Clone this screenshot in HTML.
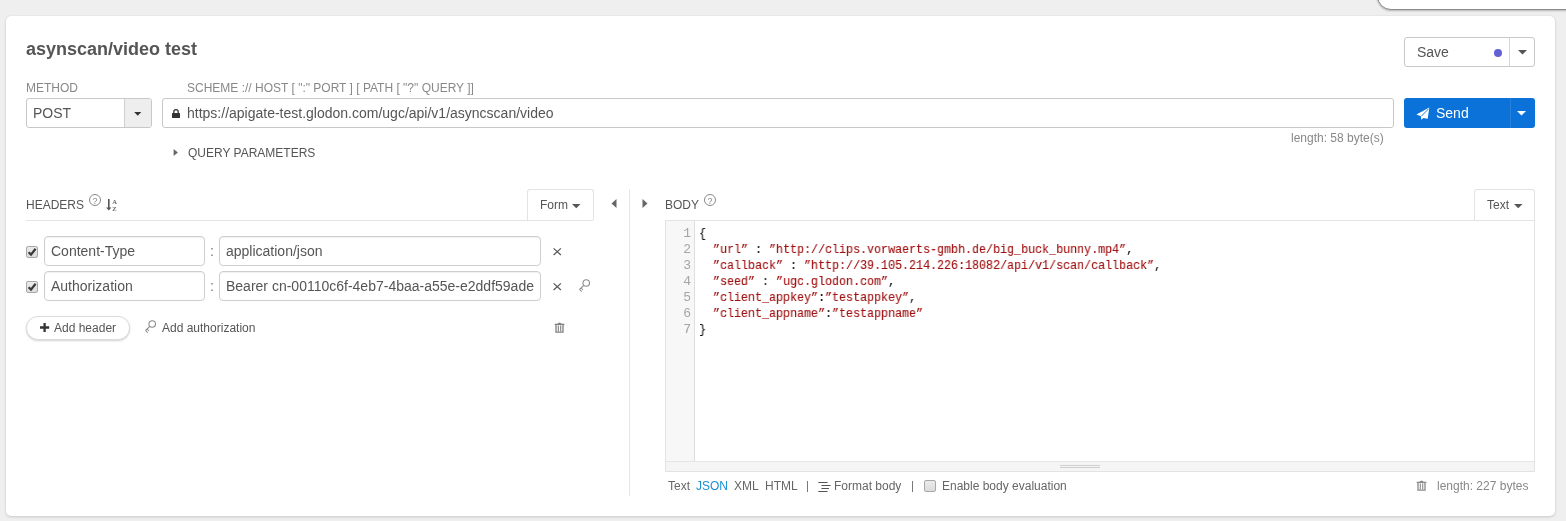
<!DOCTYPE html>
<html><head><meta charset="utf-8">
<style>
*{box-sizing:border-box;margin:0;padding:0}
html,body{width:1566px;height:521px;overflow:hidden;background:#efefef;font-family:"Liberation Sans",sans-serif;color:#505050}
.abs{position:absolute}
#topel{position:absolute;left:1377px;top:-29px;width:220px;height:39px;background:#fff;border:1px solid #8c8c8c;border-radius:14px;box-shadow:0 1px 2px rgba(0,0,0,.25)}
#card{position:absolute;left:6px;top:16px;width:1549px;height:500px;background:#fff;border-radius:5px;box-shadow:0 0 1px rgba(0,0,0,.14),0 1px 3px rgba(0,0,0,.15)}
.t{position:absolute;white-space:nowrap;line-height:1;will-change:transform}
.s12{font-size:12px}
.s14{font-size:14px}
.box{position:absolute;border:1px solid #c8c8c8;border-radius:3px;background:#fff}
.inp{position:absolute;border:1px solid #cfcfcf;border-radius:4px;background:#fff;box-shadow:inset 0 1px 1px rgba(0,0,0,.06)}
.cb{position:absolute;width:12px;height:12px;border:1px solid #a8a8a8;border-radius:2px;background:linear-gradient(#ebebeb,#dcdcdc)}
svg{position:absolute;overflow:visible;will-change:transform}
.code{position:absolute;left:699px;top:226px;font-family:"Liberation Mono",monospace;font-size:13px;letter-spacing:0;transform:scaleX(0.89744);transform-origin:0 0;line-height:16px;color:#111;white-space:pre;will-change:transform}
.code .s{color:#a01010}
.code{-webkit-text-stroke:0.12px}
.ln{position:absolute;left:666px;top:226px;width:25px;text-align:right;font-family:"Liberation Mono",monospace;font-size:13px;letter-spacing:0;line-height:16px;color:#a5a5a5;white-space:pre;will-change:transform}
</style></head><body>
<div id="topel"></div>
<div id="card"></div>

<!-- title -->
<div class="t" style="left:26px;top:40px;font-size:18px;font-weight:bold;color:#555">asynscan/video test</div>

<!-- save button -->
<div class="box" style="left:1404px;top:37px;width:131px;height:30px"></div>
<div class="abs" style="left:1509px;top:38px;width:1px;height:28px;background:#d6d6d6"></div>
<div class="t s14" style="left:1417px;top:45px;color:#555">Save</div>
<div class="abs" style="left:1494px;top:49px;width:8px;height:8px;border-radius:50%;background:#6461d6"></div>
<svg style="left:1518px;top:50px" width="9" height="5"><path d="M0 0H9L4.5 4.5Z" fill="#555"/></svg>

<!-- labels -->
<div class="t s12" style="left:26px;top:82px;color:#888">METHOD</div>
<div class="t s12" style="left:187px;top:82px;color:#888">SCHEME :// HOST [ ":" PORT ] [ PATH [ "?" QUERY ]]</div>

<!-- method select -->
<div class="box" style="left:26px;top:98px;width:126px;height:30px;overflow:hidden"><div class="abs" style="left:97px;top:0;width:28px;height:28px;background:#eee;border-left:1px solid #d0d0d0"></div></div>
<div class="t s14" style="left:33px;top:106px;color:#555">POST</div>
<svg style="left:134px;top:112px" width="8" height="5"><path d="M0.2 0H7.3L3.75 3.7Z" fill="#333"/></svg>

<!-- url -->
<div class="box" style="left:162px;top:98px;width:1232px;height:30px"></div>
<svg style="left:172px;top:109px" width="9" height="10"><path d="M1.8 4.2V2.9a2.2 2.2 0 0 1 4.4 0V4.2" stroke="#333" stroke-width="1.25" fill="none"/><rect x="0" y="4" width="8" height="5" rx="0.5" fill="#333"/></svg>
<div class="t s14" style="left:187px;top:106px;color:#555">https://apigate-test.glodon.com/ugc/api/v1/asyncscan/video</div>

<!-- send -->
<div class="abs" style="left:1404px;top:98px;width:131px;height:30px;background:#0a72d8;border-radius:3px"></div>
<div class="abs" style="left:1510px;top:98px;width:1px;height:30px;background:#2a7fd8"></div>
<svg style="left:1416px;top:107px" width="15" height="14"><path d="M13.3 0.6L0.4 7.6 5 9.3 5.2 12.8 7.4 11 11.7 11.8Z" fill="#fff"/><path d="M5.3 9.2L12.6 1.8" stroke="#0a72d8" stroke-width="0.9"/></svg>
<div class="t s14" style="left:1436px;top:106px;color:#fff">Send</div>
<svg style="left:1517px;top:111px" width="9" height="5"><path d="M0 0H9L4.5 4.5Z" fill="#fff"/></svg>

<div class="t s12" style="left:1291px;top:132px;color:#888">length: 58 byte(s)</div>

<svg style="left:173px;top:149px" width="6" height="8"><path d="M0.6 0V7L4.9 3.5Z" fill="#666"/></svg>
<div class="t s12" style="left:187.5px;top:147px;color:#555">QUERY PARAMETERS</div>

<!-- headers -->
<div class="t s12" style="left:26px;top:199px;color:#555">HEADERS</div>
<div class="abs" style="left:26px;top:220px;width:567px;height:1px;background:#e3e3e3"></div>


<!-- headers icons -->
<svg style="left:89px;top:194px" width="12" height="12"><circle cx="6" cy="6" r="5.5" stroke="#888" stroke-width="1" fill="none"/><text x="6" y="9.5" font-size="9" text-anchor="middle" fill="#888" font-family="Liberation Sans">?</text></svg>
<svg style="left:104px;top:197px" width="16" height="16"><rect x="4" y="2" width="1.6" height="9" fill="#555"/><path d="M2.2 10.5H7.4L4.8 13.6Z" fill="#555"/><text x="10.5" y="7" font-size="6.5" font-weight="bold" text-anchor="middle" fill="#666" font-family="Liberation Serif">A</text><text x="10.5" y="13.8" font-size="6.5" font-weight="bold" text-anchor="middle" fill="#666" font-family="Liberation Serif">Z</text></svg>

<!-- Form tab -->
<div class="abs" style="left:527px;top:189px;width:67px;height:31px;border:1px solid #e3e3e3;border-bottom:none;border-radius:3px 3px 0 0;background:#fff"></div>
<div class="t s12" style="left:540px;top:199px;color:#555">Form</div>
<svg style="left:572px;top:204px" width="9" height="5"><path d="M0 0H8.5L4.25 4.2Z" fill="#555"/></svg>
<svg style="left:611px;top:199px" width="6" height="9"><path d="M5.5 0V9L0.5 4.5Z" fill="#666"/></svg>
<div class="abs" style="left:629px;top:189px;width:1px;height:307px;background:#e6e6e6"></div>
<svg style="left:642px;top:199px" width="6" height="9"><path d="M0.5 0V9L5.5 4.5Z" fill="#666"/></svg>

<!-- header rows -->
<div class="cb" style="left:26px;top:246px"></div>
<svg style="left:26px;top:246px" width="12" height="12"><path d="M2.6 6.2L5 8.6 9.6 2.8" stroke="#3a3a3a" stroke-width="2.3" fill="none"/></svg>
<div class="inp" style="left:44px;top:236px;width:161px;height:30px"></div>
<div class="t s14" style="left:51px;top:244px;color:#555">Content-Type</div>
<div class="t s14" style="left:210px;top:244px;color:#777">:</div>
<div class="inp" style="left:219px;top:236px;width:322px;height:30px"></div>
<div class="t s14" style="left:226px;top:244px;color:#555">application/json</div>
<svg style="left:553px;top:248px" width="9" height="8"><path d="M0.6 0.3L7.9 7M7.9 0.3L0.6 7" stroke="#555" stroke-width="1.15"/></svg>

<div class="cb" style="left:26px;top:281px"></div>
<svg style="left:26px;top:281px" width="12" height="12"><path d="M2.6 6.2L5 8.6 9.6 2.8" stroke="#3a3a3a" stroke-width="2.3" fill="none"/></svg>
<div class="inp" style="left:44px;top:271px;width:161px;height:30px"></div>
<div class="t s14" style="left:51px;top:279px;color:#555">Authorization</div>
<div class="t s14" style="left:210px;top:279px;color:#777">:</div>
<div class="inp" style="left:219px;top:271px;width:322px;height:30px;overflow:hidden"></div>
<div class="t s14" style="left:226px;top:279px;color:#555;width:309px;overflow:hidden">Bearer cn-00110c6f-4eb7-4baa-a55e-e2ddf59ade</div>
<svg style="left:553px;top:283px" width="9" height="8"><path d="M0.6 0.3L7.9 7M7.9 0.3L0.6 7" stroke="#555" stroke-width="1.15"/></svg>
<svg style="left:578px;top:278px" width="13" height="15"><circle cx="8.2" cy="5" r="3.3" stroke="#8a8a8a" stroke-width="1.05" fill="none"/><path d="M5.9 7.4L1.5 11.5M1.5 11.5L3.7 13.7M3.1 10L4.9 11.8" stroke="#8a8a8a" stroke-width="1.05" fill="none"/></svg>

<!-- add header -->
<div class="abs" style="left:26px;top:316px;width:104px;height:24px;border:1px solid #dcdcdc;border-radius:12px;background:#fff;box-shadow:0 1px 2px rgba(0,0,0,.18)"></div>
<svg style="left:40px;top:323px" width="10" height="10"><path d="M4.6 0V9M0 4.5H9.2" stroke="#333" stroke-width="2.3"/></svg>
<div class="t s12" style="left:54px;top:322px;color:#555">Add header</div>
<svg style="left:144px;top:319px" width="13" height="15"><circle cx="8.2" cy="5" r="3.3" stroke="#8a8a8a" stroke-width="1.05" fill="none"/><path d="M5.9 7.4L1.5 11.5M1.5 11.5L3.7 13.7M3.1 10L4.9 11.8" stroke="#8a8a8a" stroke-width="1.05" fill="none"/></svg>
<div class="t s12" style="left:162px;top:322px;color:#555">Add authorization</div>
<svg style="left:554px;top:321px" width="12" height="13"><path d="M0.7 3.4H10.4" stroke="#808080" stroke-width="1.3"/><path d="M3.3 3Q5.5 0 7.7 3Z" fill="#808080"/><path d="M2 4V11.2H9V4" stroke="#808080" stroke-width="1.3" fill="none"/><path d="M4.3 4.5V10.5M6.7 4.5V10.5" stroke="#808080" stroke-width="1.1"/></svg>

<!-- body header -->
<div class="t s12" style="left:665px;top:199px;color:#555">BODY</div>
<svg style="left:704px;top:194px" width="12" height="12"><circle cx="6" cy="6" r="5.5" stroke="#888" stroke-width="1" fill="none"/><text x="6" y="9.5" font-size="9" text-anchor="middle" fill="#888" font-family="Liberation Sans">?</text></svg>
<div class="abs" style="left:665px;top:220px;width:870px;height:1px;background:#e3e3e3"></div>
<div class="abs" style="left:1474px;top:189px;width:61px;height:31px;border:1px solid #e3e3e3;border-bottom:none;border-radius:3px 3px 0 0;background:#fff"></div>
<div class="t s12" style="left:1487px;top:199px;color:#555">Text</div>
<svg style="left:1514px;top:204px" width="9" height="5"><path d="M0 0H8.5L4.25 4.2Z" fill="#555"/></svg>

<!-- editor -->
<div class="abs" style="left:665px;top:220px;width:870px;height:252px;border:1px solid #e3e3e3;background:#fff"></div>
<div class="abs" style="left:666px;top:221px;width:29px;height:240px;background:#f7f7f7;border-right:1px solid #dedede"></div>
<div class="abs" style="left:666px;top:461px;width:868px;height:10px;background:#f5f5f5;border-top:1px solid #e5e5e5"></div>
<div class="abs" style="left:1060px;top:465px;width:40px;height:1px;background:#cfcfcf"></div>
<div class="abs" style="left:1060px;top:467px;width:40px;height:1px;background:#cfcfcf"></div>
<div class="ln">1
2
3
4
5
6
7</div>
<div class="code">{
  <span class="s">”url”</span> : <span class="s">”http://clips.vorwaerts-gmbh.de/big_buck_bunny.mp4”</span>,
  <span class="s">”callback”</span> : <span class="s">”http://39.105.214.226:18082/api/v1/scan/callback”</span>,
  <span class="s">”seed”</span> : <span class="s">”ugc.glodon.com”</span>,
  <span class="s">”client_appkey”</span>:<span class="s">”testappkey”</span>,
  <span class="s">”client_appname”</span>:<span class="s">”testappname”</span>
}</div>

<!-- footer -->
<div class="t s12" style="left:668px;top:480px;color:#666">Text</div>
<div class="t s12" style="left:696px;top:480px;color:#1a8fd1">JSON</div>
<div class="t s12" style="left:734px;top:480px;color:#666">XML</div>
<div class="t s12" style="left:765px;top:480px;color:#666">HTML</div>
<div class="abs" style="left:806.5px;top:481px;width:1px;height:11px;background:#777"></div>
<svg style="left:818px;top:481px" width="13" height="12"><path d="M0.3 1.5H9.6M3.4 4.5H12.6M3.4 7.5H11M0.3 10.5H9.6" stroke="#555" stroke-width="1.2"/></svg>
<div class="t s12" style="left:834px;top:480px;color:#666">Format body</div>
<div class="abs" style="left:912px;top:481px;width:1px;height:11px;background:#777"></div>
<div class="cb" style="left:924px;top:480px"></div>
<div class="t s12" style="left:942px;top:480px;color:#666">Enable body evaluation</div>
<svg style="left:1416px;top:479px" width="12" height="13"><path d="M0.7 3.4H10.4" stroke="#8a8a8a" stroke-width="1.3"/><path d="M3.3 3Q5.5 0 7.7 3Z" fill="#8a8a8a"/><path d="M2 4V11.2H9V4" stroke="#8a8a8a" stroke-width="1.3" fill="none"/><path d="M4.3 4.5V10.5M6.7 4.5V10.5" stroke="#8a8a8a" stroke-width="1.1"/></svg>
<div class="t s12" style="left:1437px;top:480px;color:#888">length: 227 bytes</div>

</body></html>
